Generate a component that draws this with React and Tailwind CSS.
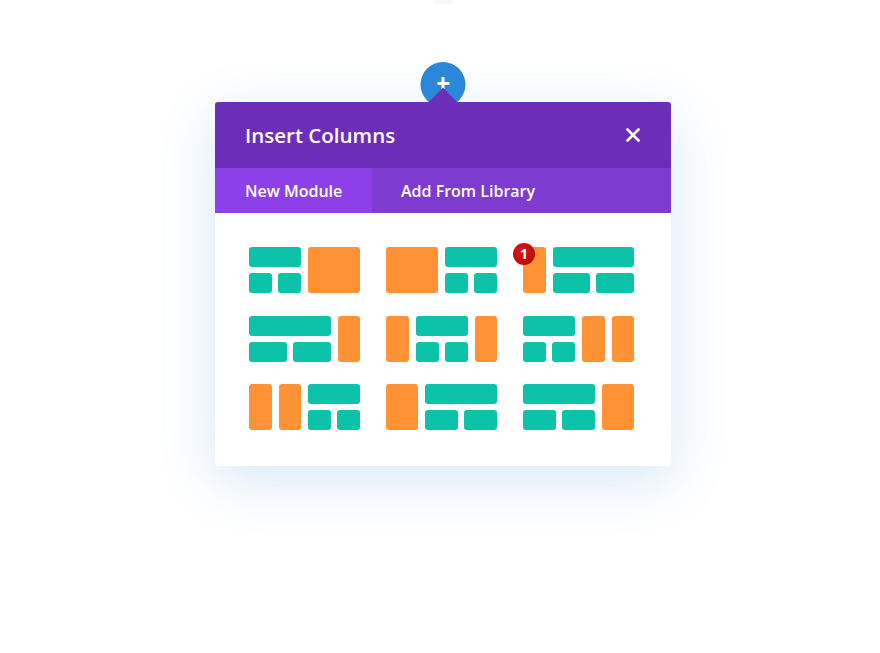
import React from "react";

const layouts = [
  [["t", 1], ["o", 1]],
  [["o", 1], ["t", 1]],
  [["o", 1], ["t", 3]],
  [["t", 3], ["o", 1]],
  [["o", 1], ["t", 2], ["o", 1]],
  [["t", 2], ["o", 1], ["o", 1]],
  [["o", 1], ["o", 1], ["t", 2]],
  [["o", 1], ["t", 2]],
  [["t", 2], ["o", 1]],
];

const gridCols = [
  "grid-cols-2",
  "grid-cols-2",
  "grid-cols-4",
  "grid-cols-4",
  "grid-cols-4",
  "grid-cols-4",
  "grid-cols-4",
  "grid-cols-3",
  "grid-cols-3",
];

const spans = { 1: "col-span-1", 2: "col-span-2", 3: "col-span-3" };

const TealBlock = ({ span }) => (
  <div className={`${spans[span]} flex flex-col gap-[6px]`}>
    <div className="h-[20px] rounded-[3px] bg-[#0cc2a8]" />
    <div className="flex h-[20px] gap-[6px]">
      <div className="flex-1 rounded-[3px] bg-[#0cc2a8]" />
      <div className="flex-1 rounded-[3px] bg-[#0cc2a8]" />
    </div>
  </div>
);

const OrangeBlock = ({ span }) => (
  <div className={`${spans[span]} rounded-[3px] bg-[#fe9234]`} />
);

const LayoutOption = ({ parts, cols }) => (
  <div className={`grid h-[46px] ${cols} gap-x-[7px]`}>
    {parts.map(([kind, span], i) =>
      kind === "t" ? <TealBlock key={i} span={span} /> : <OrangeBlock key={i} span={span} />
    )}
  </div>
);

export default function App() {
  return (
    <div className="min-h-[653px] bg-white pl-[6px] font-['Open_Sans',sans-serif]">
      <div className="mx-auto h-[4px] w-[19px] rounded-b-[2px] bg-[#f7f7f8]" />

      <div className="relative mx-auto mt-[98px] w-[456px] rounded-[3px] bg-white shadow-[0_14px_55px_rgba(43,135,218,0.2)]">
        <div className="absolute left-1/2 top-[-40px] flex h-[45px] w-[45px] -translate-x-1/2 items-center justify-center rounded-full bg-[#2b87da]">
          <div className="relative -mt-[3px] h-[12px] w-[12px]">
            <div className="absolute left-0 top-[4.5px] h-[3px] w-[12px] bg-white" />
            <div className="absolute left-[4.5px] top-0 h-[12px] w-[3px] bg-white" />
          </div>
        </div>
        <div className="absolute left-1/2 top-[-10px] h-[20px] w-[20px] -translate-x-1/2 rotate-45 bg-[#6c2eb9]" />

        <div className="flex h-[66px] items-center justify-between rounded-t-[3px] bg-[#6c2eb9] pl-[30px] pr-[31px]">
          <h2 className="relative text-[20.5px] font-semibold text-white">Insert Columns</h2>
          <svg width="14" height="14" viewBox="0 0 14 14" className="relative">
            <path d="M1.5 1.5 L12.5 12.5 M12.5 1.5 L1.5 12.5" stroke="white" strokeWidth="2.6" strokeLinecap="round" />
          </svg>
        </div>

        <div className="flex h-[45px] whitespace-nowrap bg-[#7d3bcf] text-[16px] font-semibold text-white">
          <div className="flex w-[157px] items-center bg-[#8e40e8] pl-[30px]">New Module</div>
          <div className="flex items-center px-[29px]">Add From Library</div>
        </div>

        <div className="grid grid-cols-3 gap-x-[26px] gap-y-[22.5px] pb-[36px] pl-[34px] pr-[37px] pt-[34px]">
          {layouts.map((parts, i) => (
            <LayoutOption key={i} parts={parts} cols={gridCols[i]} />
          ))}
        </div>

        <div className="absolute left-[298px] top-[141px] flex h-[22px] w-[22px] items-center justify-center rounded-full bg-[radial-gradient(circle_at_40%_35%,#d8191a,#b80000)] text-[14px] font-bold leading-none text-white">
          1
        </div>
      </div>
    </div>
  );
}
